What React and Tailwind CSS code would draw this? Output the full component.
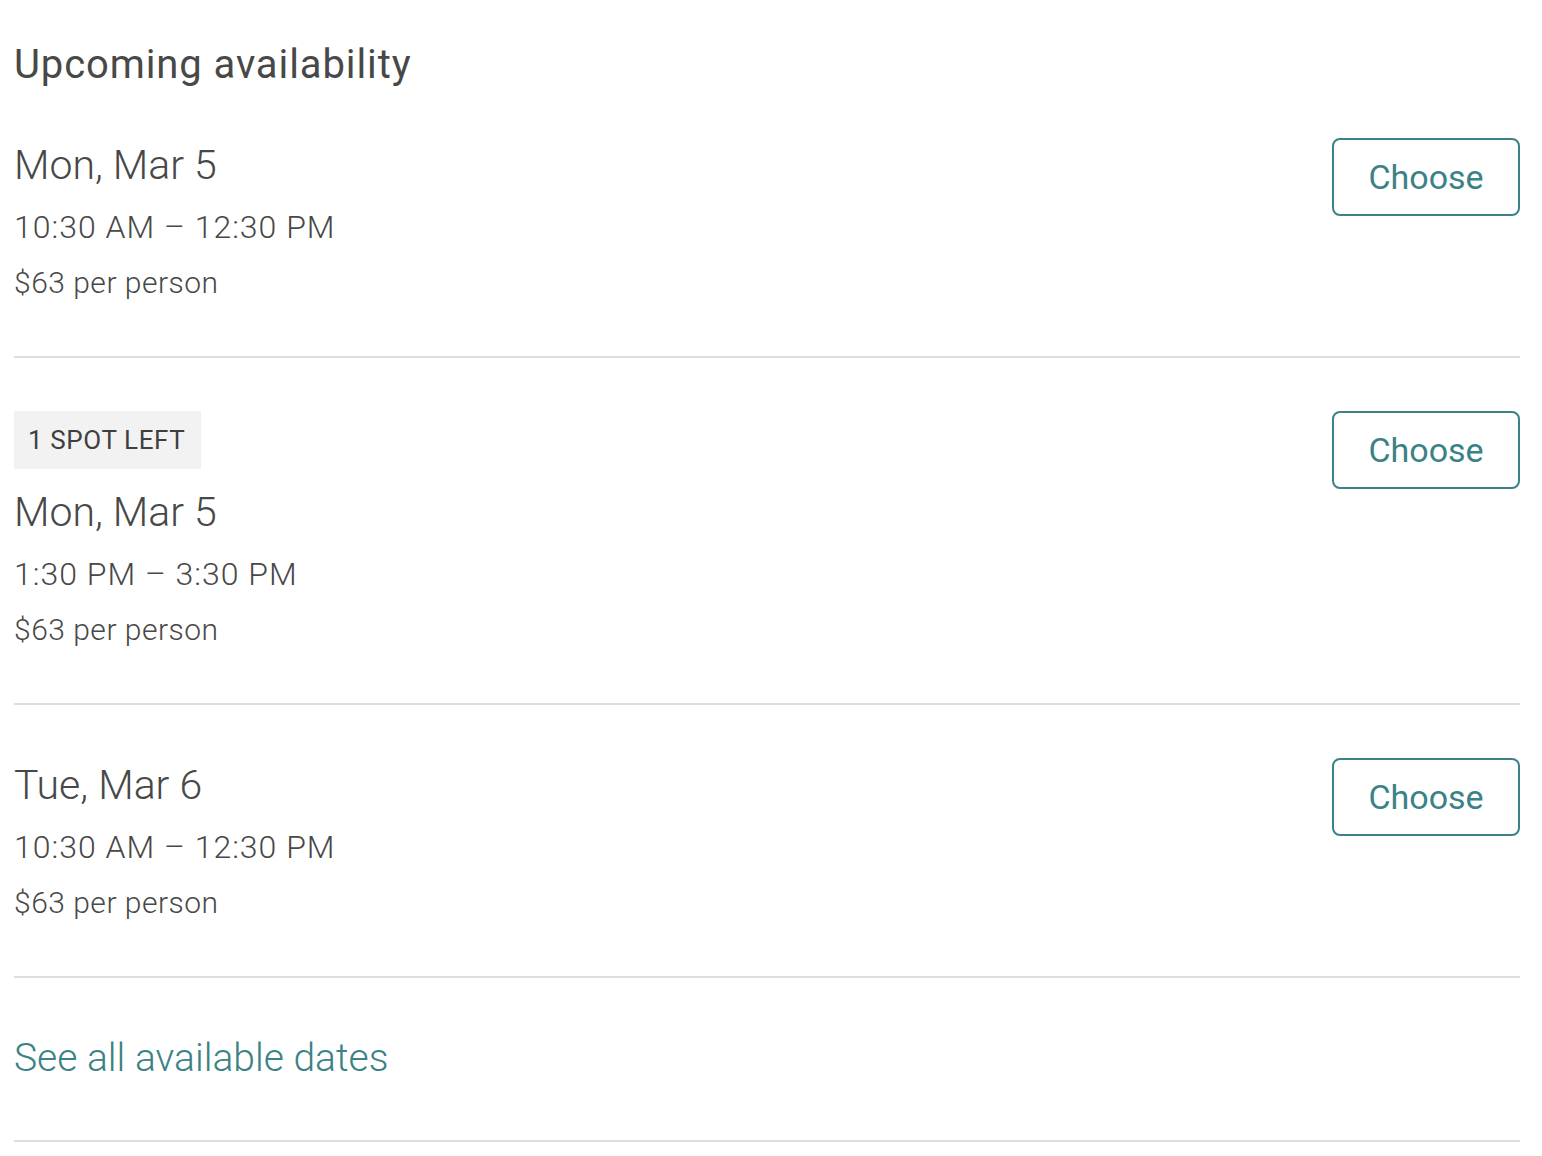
import React from "react"

const slots = [
    { date: "Mon, Mar 5", time: "10:30 AM – 12:30 PM", price: "$63 per person" },
    { date: "Mon, Mar 5", time: "1:30 PM – 3:30 PM", price: "$63 per person", spots: "1 SPOT LEFT" },
    { date: "Tue, Mar 6", time: "10:30 AM – 12:30 PM", price: "$63 per person" },
]

const Slot = ({ slot }) => (
    <div className="flex justify-between items-start pt-[53px] pb-[55px] border-b-2 border-[#dedede]">
        <div className="flex flex-col">
            {slot.spots && (
                <div className="self-start bg-[#f2f2f2] pl-[14px] pr-[16px] h-[58px] flex items-center text-[26px] tracking-[0.6px] text-[#3f3f3f] mb-[16px]">
                    {slot.spots}
                </div>
            )}
            <div className="mt-[3px] text-[41px] leading-[48px] font-light text-[#484848]">{slot.date}</div>
            <div className="mt-[18px] text-[32px] leading-[40px] tracking-[1px] font-light text-[#484848]">{slot.time}</div>
            <div className="mt-[18px] text-[30px] leading-[36px] tracking-[0.5px] font-light text-[#484848]">{slot.price}</div>
        </div>
        <button className="w-[188px] h-[78px] border-2 border-[#3b8286] rounded-[8px] text-[34px] text-[#3b8286]">
            Choose
        </button>
    </div>
)

const App = () => {
    return (
        <div className="min-h-screen bg-white" style={{ fontFamily: "Roboto, 'Liberation Sans', sans-serif" }}>
            <div className="pl-[14px] pr-[22px]">
                <h2 className="pt-[41px] text-[40px] leading-[48px] tracking-[0.9px] text-[#484848]">Upcoming availability</h2>
                <div className="-mt-[4px]">
                    {slots.map((s, i) => (
                        <Slot key={i} slot={s} />
                    ))}
                </div>
                <div className="pt-[56px] pb-[58px] border-b-2 border-[#dedede]">
                    <a href="#" className="block text-[39px] leading-[48px] font-light text-[#3b8286]">See all available dates</a>
                </div>
            </div>
        </div>
    )
}

export default App
